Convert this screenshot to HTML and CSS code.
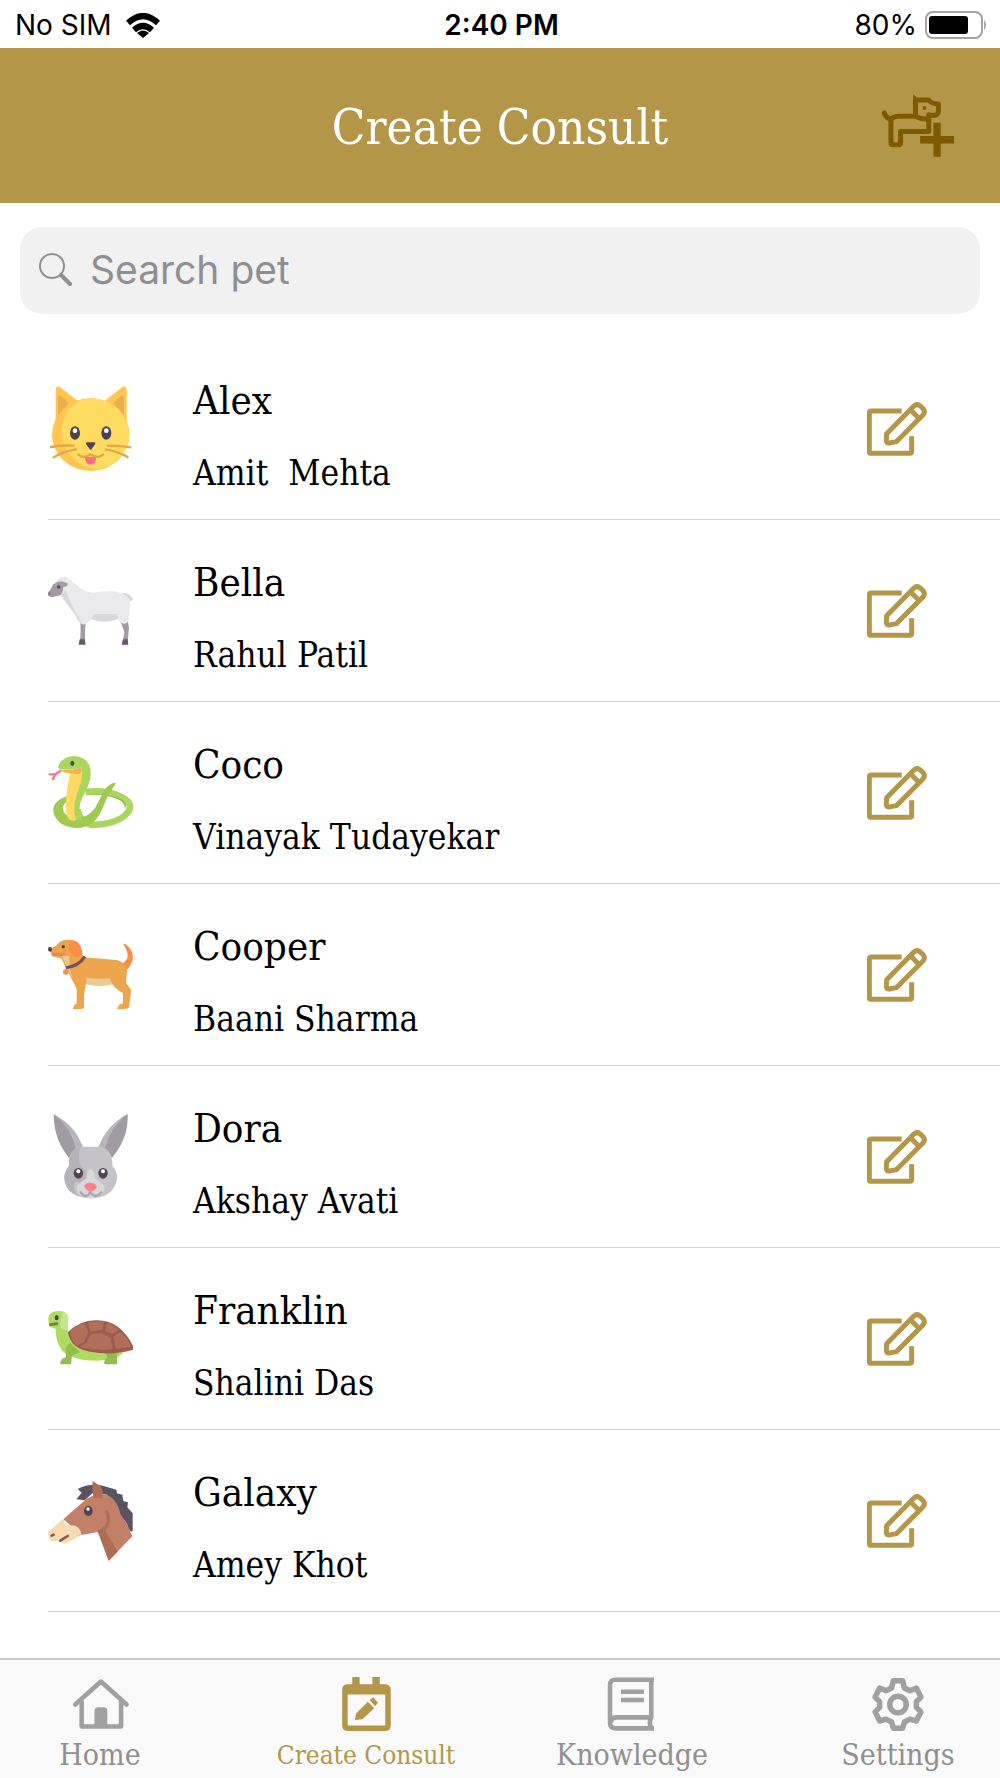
FILE: index.html
```
<!DOCTYPE html>
<html lang="en">
<head>
    <meta charset="UTF-8">
    <meta name="viewport" content="width=device-width, initial-scale=1.0">
    <title>Create Consult</title>
    <link rel="stylesheet" href="styles.css">
</head>
<body>
    <!-- shared icons -->
    <svg class="sprite" aria-hidden="true">
        <symbol id="edit" viewBox="51 33 180 162">
            <g fill="none" stroke="#b49649" stroke-width="15" stroke-linejoin="round">
                <path d="M155 60H64Q58 60 58 66V181Q58 187 64 187H179Q185 187 185 181V136"/>
                <path d="M110 128 191 46Q201 36 211 45L218 52Q228 62 218 73L139 152 118 156Q109 156 109 147Z"/>
                <path d="M181 56 209 84"/>
            </g>
        </symbol>
    </svg>

    <div class="app">
        <div class="status-bar">
            <div class="carrier">
                <span>No SIM</span>
                <svg class="wifi" viewBox="0 0 34 25">
                    <g fill="none" stroke="#000" stroke-width="6">
                        <path d="M2 10Q17-4 32 10"/>
                        <path d="M8 17Q17 9 26 17"/>
                    </g>
                    <path d="M11 20Q17 15 23 20L17 25Z"/>
                </svg>
            </div>
            <div class="clock">2:40 PM</div>
            <div class="power">
                <span>80%</span>
                <svg class="battery" viewBox="0 0 63 28">
                    <rect x="1" y="1" width="56" height="26" rx="7" fill="#fff" stroke="#a3a3a3" stroke-width="2"/>
                    <rect x="4" y="5" width="39" height="18" rx="3"/>
                    <path d="M59 9Q63 14 59 19Z" fill="#a3a3a3"/>
                </svg>
            </div>
        </div>

        <header class="header">
            <h1>Create Consult</h1>
            <button class="add-pet" type="button" aria-label="Add pet">
                <svg viewBox="65 43 217 188">
                    <g fill="none" stroke="#7e5b00" stroke-width="15" stroke-linejoin="round" stroke-linecap="round">
                        <path d="M72 99Q74 112 91 118Q101 109 115 109H164Q186 119 206 118V155H121V190Q121 195 115 195H98Q92 195 92 190V118"/>
                        <path d="M166 108V60H205Q213 72 235 72V93Q235 106 219 107L206 105V118"/>
                    </g>
                    <path d="M159 43 175 57V68H159Z" fill="#7e5b00"/>
                    <circle cx="193" cy="84" r="6" fill="#7e5b00"/>
                    <path d="M231 129V231M180 180H282" stroke="#b49649" stroke-width="28"/>
                    <path d="M231 129V231M180 180H282" stroke="#7e5b00" stroke-width="22"/>
                </svg>
            </button>
        </header>

        <label class="search">
            <svg viewBox="0 0 34 34" aria-hidden="true">
                <circle cx="14" cy="13" r="12" fill="none" stroke="#8e8e93" stroke-width="2"/>
                <path d="M23 22 32 31" stroke="#8e8e93" stroke-width="4" stroke-linecap="round"/>
            </svg>
            <input type="search" placeholder="Search pet" aria-label="Search pet">
        </label>

        <ul class="pet-list">
            <li class="pet">
                <svg class="avatar" viewBox="24 34 255 255">
                    <path d="M47 145V43Q49 32 60 37L113 78ZM260 145V43Q257 32 247 37L195 78Z" fill="#ffc550"/>
                    <path d="M54 123V68Q56 59 64 64L87 86ZM252 123V68Q249 59 242 64L220 86Z" fill="#e9af4c"/>
                    <ellipse cx="152" cy="180" rx="116" ry="109" fill="#ffc550"/>
                    <path d="M152 71C105 71 65 114 65 170S113 283 174 283C221 276 267 237 267 180S220 71 152 71Z" fill="#ffdb62"/>
                    <g fill="#4d4250"><ellipse cx="105" cy="175" rx="15" ry="20"/><ellipse cx="199" cy="175" rx="15" ry="20"/><path d="M138 208Q136 203 143 203H162Q168 203 165 209L155 223Q152 227 149 223Z"/></g>
                    <g fill="#fff"><circle cx="105" cy="168" r="7"/><circle cx="199" cy="168" r="7"/></g>
                    <path d="M135 247H168Q169 270 152 270T135 247Z" fill="#fa6e80"/>
                    <g fill="none" stroke="#e2a643" stroke-width="7" stroke-linecap="round"><path d="M33 217Q63 211 101 213M203 213Q243 213 271 218M41 248Q70 230 108 224M198 224Q236 231 263 247M115 240Q130 254 151 239Q173 254 189 240"/></g>
                </svg>
                <div class="pet-info">
                    <h2>Alex</h2>
                    <p>Amit&nbsp; Mehta</p>
                </div>
                <button class="edit-btn" type="button" aria-label="Edit Alex"><svg><use href="#edit"/></svg></button>
            </li>
            <li class="pet">
                <svg class="avatar" viewBox="24 25 255 255">
                    <path d="M245 99Q270 98 279 119Q273 130 261 122ZM151 160H235V178Q191 194 151 178Z" fill="#d8d7da"/>
                    <path d="M121 180H139L135 209V247H120L122 216ZM240 180H263L267 205 263 247H248L253 216Z" fill="#a29aa4"/>
                    <path d="M119 239H134L137 255H116ZM249 239H263L265 255H245Z" fill="#685b67"/>
                    <path d="M46 70Q59 49 78 51L110 75Q131 98 162 99Q181 94 212 94Q250 95 270 120L267 179Q261 200 239 188L231 163H161Q150 190 132 195Q116 194 106 166L62 111Z" fill="#eae9ec"/>
                    <path d="M64 106 77 91Q94 142 127 192Q114 186 106 166Z" fill="#d8d7da"/>
                    <path d="M46 70Q61 59 84 72Q83 80 70 82L67 98Q64 109 49 109L37 113Q26 112 24 102L40 74Z" fill="#a29aa4"/>
                    <path d="M27 94Q35 98 31 105L26 108Q23 101 27 94Z" fill="#887b88"/>
                    <circle cx="56" cy="82" r="5" fill="#554b58"/>
                </svg>
                <div class="pet-info">
                    <h2>Bella</h2>
                    <p>Rahul Patil</p>
                </div>
                <button class="edit-btn" type="button" aria-label="Edit Bella"><svg><use href="#edit"/></svg></button>
            </li>
            <li class="pet">
                <svg class="avatar" viewBox="24 31 255 255">
                    <path d="M137 157Q194 149 238 169Q286 190 262 220Q236 252 157 256Q119 247 112 209" fill="none" stroke="#aad65d" stroke-width="20"/>
                    <path d="M138 166Q200 162 239 181Q257 193 254 210Q271 180 213 168Q176 158 138 166Z" fill="#91bd4b"/>
                    <path d="M84 170Q32 188 44 224Q58 259 107 263Q156 264 181 216L201 170 225 131Q208 134 196 151L167 206Q142 240 105 236Q67 230 66 205Q67 191 84 182Z" fill="#9fc951" stroke="#9fc951" stroke-width="4" stroke-linejoin="round"/>
                    <path d="M60 90Q99 103 124 88Q134 116 116 162Q103 199 111 241Q89 249 81 229Q76 214 79 174Q83 125 92 99Q69 102 60 90Z" fill="#ffd964"/>
                    <path d="M54 83Q63 50 104 49Q154 54 152 104Q150 137 129 169Q109 207 127 241H109Q94 204 115 153Q130 111 125 82Q100 93 59 89Z" fill="#aad65d"/>
                    <path d="M62 91Q99 93 124 81Q129 94 120 102Q89 107 62 91Z" fill="#efb64f"/>
                    <path d="M61 94 46 104 29 104M46 104 39 118" fill="none" stroke="#ff757f" stroke-width="7" stroke-linecap="round"/>
                    <path d="M62 242Q105 262 146 240" fill="none" stroke="#9fc951" stroke-width="14"/>
                    <ellipse cx="97" cy="71" rx="6" ry="8" fill="#504456"/>
                </svg>
                <div class="pet-info">
                    <h2>Coco</h2>
                    <p>Vinayak Tudayekar</p>
                </div>
                <button class="edit-btn" type="button" aria-label="Edit Coco"><svg><use href="#edit"/></svg></button>
            </li>
            <li class="pet">
                <svg class="avatar" viewBox="24 22 255 255">
                    <path d="M248 116Q276 98 251 61Q250 55 256 58Q285 80 277 108Q271 126 260 135Z" fill="#fb8d48"/>
                    <path d="M137 155H218V179Q181 190 137 179Z" fill="#ecc998"/>
                    <path d="M27 70Q45 70 59 52Q77 41 101 48L132 98 229 106Q260 113 261 138L258 175 274 196 267 248Q265 254 232 254Q234 238 249 236V206Q216 188 210 161Q174 164 140 160L132 215V250Q130 254 99 254Q100 239 110 237V192L75 124 65 102 36 94Z" fill="#eca54c"/>
                    <path d="M66 94H88V126L98 162 81 128Z" fill="#ecc998"/>
                    <path d="M89 47Q123 43 127 87Q117 104 98 93Q82 74 89 47Z" fill="#fb8d48"/>
                    <path d="M36 84 75 85 74 91Q58 97 37 94Z" fill="#ed844b"/>
                    <path d="M77 129Q116 125 135 95" stroke="#73505a" stroke-width="9" fill="none"/>
                    <circle cx="77" cy="142" r="8" fill="#fb8d48"/>
                    <g fill="#50424d"><circle cx="70" cy="66" r="5"/><ellipse cx="30" cy="74" rx="6" ry="7"/></g>
                </svg>
                <div class="pet-info">
                    <h2>Cooper</h2>
                    <p>Baani Sharma</p>
                </div>
                <button class="edit-btn" type="button" aria-label="Edit Cooper"><svg><use href="#edit"/></svg></button>
            </li>
            <li class="pet">
                <svg class="avatar" viewBox="24 43 255 255">
                    <path d="M41 43Q101 78 129 142L87 174Q41 120 41 43ZM263 43Q202 76 176 142L216 174Q266 116 263 43Z" fill="#a19ca3"/>
                    <path d="M48 49Q97 90 107 147L128 142Q104 75 48 49ZM253 51Q208 91 195 145L176 142Q198 81 253 51Z" fill="#b9b6bb"/>
                    <path d="M121 141H183Q213 148 216 181L218 200Q239 224 228 251Q211 296 152 296T76 251Q66 227 87 198V175Q92 150 121 141Z" fill="#c5c3c7"/>
                    <path d="M122 141Q105 190 138 214L142 251 105 248Q93 275 119 290Q81 281 75 248Q67 224 87 198Q85 148 122 141Z" fill="#b6b2b9"/>
                    <path d="M152 207Q165 214 165 236L194 258Q193 295 152 296T109 258L139 236Q139 214 152 207Z" fill="#d8d7da"/>
                    <path d="M122 278Q137 300 151 278Q167 300 184 278" fill="none" stroke="#aaa6ad" stroke-width="7" stroke-linecap="round"/>
                    <path d="M132 261Q136 248 152 249T171 261Q153 291 132 261Z" fill="#ff8188"/>
                    <g fill="#51434f"><ellipse cx="115" cy="221" rx="14" ry="16"/><ellipse cx="189" cy="221" rx="14" ry="16"/></g>
                    <g fill="#fff"><circle cx="115" cy="215" r="6"/><circle cx="189" cy="215" r="6"/></g>
                </svg>
                <div class="pet-info">
                    <h2>Dora</h2>
                    <p>Akshay Avati</p>
                </div>
                <button class="edit-btn" type="button" aria-label="Edit Dora"><svg><use href="#edit"/></svg></button>
            </li>
            <li class="pet">
                <svg class="avatar" viewBox="24 -10 255 255">
                    <path d="M25 55Q30 31 64 36Q87 39 83 69L84 96Q102 151 250 158Q239 181 169 184Q95 184 64 151Q45 119 47 88L29 83Q24 73 25 55Z" fill="#aedb60"/>
                    <path d="M64 36Q92 40 83 78L84 98 78 92Q62 93 59 77Q68 51 64 36Z" fill="#c2e58e"/>
                    <path d="M90 130 120 159 96 169 93 195H60Q62 176 78 174L77 147ZM197 162 232 160 231 195H193Q190 181 203 177Z" fill="#93bd4d"/>
                    <path d="M84 98Q122 62 168 63Q239 61 279 140V151Q214 169 155 158Q91 149 84 98Z" fill="#9a5b50"/>
                    <path d="M91 94Q112 76 133 72L145 99 132 128 109 139Q92 120 91 94ZM144 69Q167 63 193 68L185 92 152 97ZM202 71Q223 77 237 91L216 105 194 94ZM153 105 187 100 211 115 219 150Q170 157 119 143L139 130ZM220 112 243 98Q264 116 273 142L228 150Z" fill="#b16e59"/>
                    <path d="M31 76 51 73" stroke="#668545" stroke-width="8" stroke-linecap="round"/>
                    <ellipse cx="50" cy="55" rx="6" ry="8" fill="#504456"/>
                </svg>
                <div class="pet-info">
                    <h2>Franklin</h2>
                    <p>Shalini Das</p>
                </div>
                <button class="edit-btn" type="button" aria-label="Edit Franklin"><svg><use href="#edit"/></svg></button>
            </li>
            <li class="pet">
                <svg class="avatar" viewBox="24 25 255 255">
                    <path d="M109 89 125 69 113 58Q151 39 191 49L229 60 231 71 247 75 250 94 264 98 262 113 278 131V185Q268 190 261 162L238 132 201 75 159 69 134 92Z" fill="#5c5360"/>
                    <path d="M70 149 139 88Q185 60 219 87Q237 108 241 133L262 165 277 200 206 273 174 187 125 196Z" fill="#c28068"/>
                    <path d="M174 187 195 180 233 246 206 273Z" fill="#af6c56"/>
                    <path d="M198 121Q221 169 174 187" fill="none" stroke="#af6c56" stroke-width="10"/>
                    <path d="M158 33 184 52Q192 69 184 87L160 83Q155 55 158 33Z" fill="#af6c56"/>
                    <path d="M24 187 70 147Q75 171 99 167Q121 170 125 197L75 222 56 213 34 214Q25 205 24 187Z" fill="#f5dbaf"/>
                    <path d="M35 198 41 195M61 213 83 199" stroke="#915549" stroke-width="8" stroke-linecap="round"/>
                    <ellipse cx="145" cy="124" rx="13" ry="15" fill="#50434f"/>
                    <circle cx="144" cy="118" r="5" fill="#fff"/>
                </svg>
                <div class="pet-info">
                    <h2>Galaxy</h2>
                    <p>Amey Khot</p>
                </div>
                <button class="edit-btn" type="button" aria-label="Edit Galaxy"><svg><use href="#edit"/></svg></button>
            </li>
        </ul>

        <nav class="tab-bar">
            <a href="#home">
                <svg viewBox="0 0 60 60">
                    <g fill="none" stroke="#a0a0a0" stroke-width="5" stroke-linejoin="round">
                        <path d="M3 30 31 5 59 30" stroke-linecap="round"/>
                        <path d="M10 26V54H53V26"/>
                    </g>
                    <path d="M24 55V37Q24 33 28 33H34Q38 33 38 37V55Z" fill="#a0a0a0"/>
                </svg>
                <span>Home</span>
            </a>
            <a href="#consult" class="active" aria-current="page">
                <svg viewBox="0 0 60 60" fill="#b49649">
                    <path d="M10 8H15V0H23V8H37V0H45V8H50Q57 8 57 14V53Q57 59 50 59H11Q4 59 4 53V14Q4 8 10 8ZM10 19V53H51V19Z" fill-rule="evenodd"/>
                    <path d="M18 47 19 40 32 27 39 34 26 46ZM34 25 38 22 43 28 40 32Z"/>
                </svg>
                <span>Create Consult</span>
            </a>
            <a href="#knowledge">
                <svg viewBox="0 0 60 60">
                    <path d="M54 3H12Q6 3 6 9V50Q6 56 12 56H54M7 50Q7 44 13 44H51M51 3V44Q48 50 51 56" fill="none" stroke="#a0a0a0" stroke-width="5"/>
                    <path d="M18 16H43M18 25H43" stroke="#a0a0a0" stroke-width="5"/>
                </svg>
                <span>Knowledge</span>
            </a>
            <a href="#settings">
                <svg viewBox="0 0 60 60">
                    <g fill="none" stroke="#a0a0a0" stroke-width="6" stroke-linejoin="round">
                        <path d="M25 4H35L37 12 43 15 50 12 55 22 50 27V33L55 38 50 48 43 46 37 49 35 56H25L23 49 17 46 10 48 5 38 10 33V27L5 22 10 12 17 15 23 12Z"/>
                        <circle cx="30" cy="30" r="9"/>
                    </g>
                </svg>
                <span>Settings</span>
            </a>
        </nav>
    </div>
</body>
</html>
```
FILE: styles.css
```
:root {
    --gold: #b49649;
    --grey: #8f8f8f;
    --line: #d3d3d4;
    --slab: "Roboto Slab", "DejaVu Serif Condensed", "DejaVu Serif", serif;
    --sans: Inter, sans-serif;
}

* {
    margin: 0;
    padding: 0;
    box-sizing: border-box;
}

body {
    font-family: var(--slab);
    background: #fff;
    color: #000;
}

svg {
    display: block;
}

button {
    background: none;
    border: none;
    cursor: pointer;
}

.sprite {
    display: none;
}

.app {
    display: flex;
    flex-direction: column;
    height: 100vh;
}

/* status bar */
.status-bar {
    display: grid;
    grid-template-columns: 1fr auto 1fr;
    align-items: center;
    height: 48px;
    flex-shrink: 0;
    padding: 2px 12px 0 15px;
    font-family: var(--sans);
    font-size: 28px;
}

.carrier {
    display: flex;
    align-items: center;
    gap: 14px;
}

.power {
    display: flex;
    align-items: center;
    justify-content: flex-end;
    gap: 8px;
}

.clock {
    font-weight: 600;
}

.wifi {
    width: 34px;
    height: 25px;
}

.battery {
    width: 63px;
    height: 28px;
}

/* header */
.header {
    display: grid;
    grid-template-columns: 1fr auto 1fr;
    align-items: center;
    height: 155px;
    flex-shrink: 0;
    padding: 0 46px;
    background: var(--gold);
    color: #fff;
}

.header h1 {
    grid-column: 2;
    padding-top: 4px;
    font-size: 49px;
    font-weight: 400;
}

.add-pet {
    justify-self: end;
}

.add-pet svg {
    width: 72px;
    height: 63px;
}

/* search */
.search {
    display: flex;
    align-items: center;
    gap: 18px;
    height: 87px;
    flex-shrink: 0;
    margin: 24px 20px;
    padding: 0 18px 2px;
    border-radius: 22px;
    background: #f1f1f1;
}

.search svg {
    width: 34px;
    height: 34px;
}

.search input {
    flex: 1;
    min-width: 0;
    border: none;
    outline: none;
    background: none;
    font-family: var(--sans);
    font-size: 39px;
}

.search input::placeholder {
    color: #8e8e93;
}

/* pets */
.pet-list {
    flex: 1;
    min-height: 0;
    overflow: hidden;
    padding-left: 48px;
    list-style: none;
}

.pet {
    display: flex;
    align-items: center;
    height: 182px;
    padding-right: 73px;
    border-bottom: 1px solid var(--line);
}

.avatar {
    width: 85px;
    height: 85px;
    margin-right: 60px;
}

.pet-info {
    flex: 1;
    padding-top: 16px;
}

.pet-info h2 {
    font-size: 40px;
    font-weight: 400;
    line-height: 72px;
}

.pet-info p {
    font-size: 35px;
    line-height: 74px;
}

.edit-btn svg {
    width: 60px;
    height: 54px;
}

/* tabs */
.tab-bar {
    display: flex;
    justify-content: space-between;
    height: 120px;
    flex-shrink: 0;
    padding: 17px 12px 0 10px;
    border-top: 2px solid #c9c9c9;
    background: #f9f9f9;
}

.tab-bar a {
    display: flex;
    flex-direction: column;
    align-items: center;
    width: 180px;
    color: var(--grey);
    font-size: 30px;
    line-height: 46px;
    text-decoration: none;
    white-space: nowrap;
}

.tab-bar a.active {
    color: var(--gold);
    font-size: 26px;
}

.tab-bar svg {
    width: 60px;
    height: 60px;
}
```
